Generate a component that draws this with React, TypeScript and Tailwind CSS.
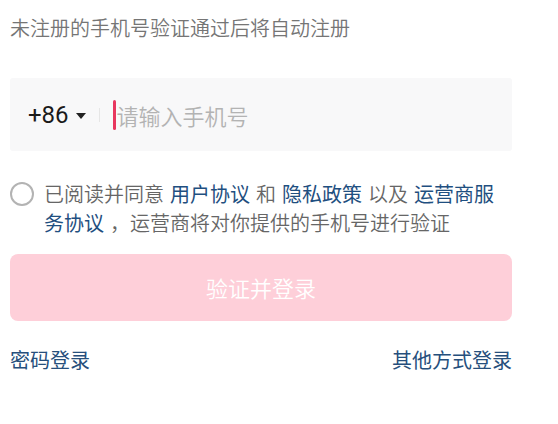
const cjk = { fontFamily: '"Noto Sans CJK SC", "Noto Sans", sans-serif' }

export default function App() {
  return (
    <div className="w-[558px] h-[424px] bg-white overflow-hidden font-[350]" style={cjk}>
      <div className="ml-[10px] w-[502px] pt-[14px]">
        <p className="text-[20px] leading-[28px] text-[#757575]">未注册的手机号验证通过后将自动注册</p>

        {/* phone input */}
        <div className="mt-[36px] h-[73px] bg-[#f8f8f9] rounded-[3px] flex items-center pl-[18px]">
          <span className="text-[24px] leading-none text-[#1a1a1a] font-normal" style={{ fontFamily: 'Roboto, "Noto Sans", sans-serif' }}>
            +86
          </span>
          <svg width="10" height="6" viewBox="0 0 10 6" className="ml-[7px] mt-[2px]">
            <path d="M0 0 L10 0 L5 6 Z" fill="#222" />
          </svg>
          <div className="ml-[13px] w-px h-[14px] bg-[#e6e6e6]" />
          <div className="ml-[13px] w-[3px] h-[30px] rounded-full bg-[#e8375f]" />
          <span className="ml-px text-[22px] leading-none text-[#b3b3b3]">请输入手机号</span>
        </div>

        {/* agreement */}
        <div className="mt-[28px] flex items-start">
          <div className="mt-[3px] w-[24px] h-[24px] shrink-0 rounded-full border-2 border-[#b3b3b3]" />
          <p className="ml-[10px] text-[20px] leading-[29px] text-[#666666]">
            <span>已阅读并同意</span>
            <span className="ml-[6px] text-[#1f4f80] font-normal">用户协议</span>
            <span className="ml-[6px]">和</span>
            <span className="ml-[6px] text-[#1f4f80] font-normal">隐私政策</span>
            <span className="ml-[6px]">以及</span>
            <span className="ml-[6px] text-[#1f4f80] font-normal">运营商服</span>
            <br />
            <span className="text-[#1f4f80] font-normal">务协议</span>
            <span className="ml-[6px]">，运营商将对你提供的手机号进行验证</span>
          </p>
        </div>

        <button className="mt-[17px] w-full h-[67px] rounded-[8px] bg-[#fecfd9] text-white text-[22px]">
          验证并登录
        </button>

        <div className="mt-[25px] flex justify-between text-[20px] leading-[28px] text-[#264f7c] font-normal">
          <span>密码登录</span>
          <span>其他方式登录</span>
        </div>
      </div>
    </div>
  )
}
